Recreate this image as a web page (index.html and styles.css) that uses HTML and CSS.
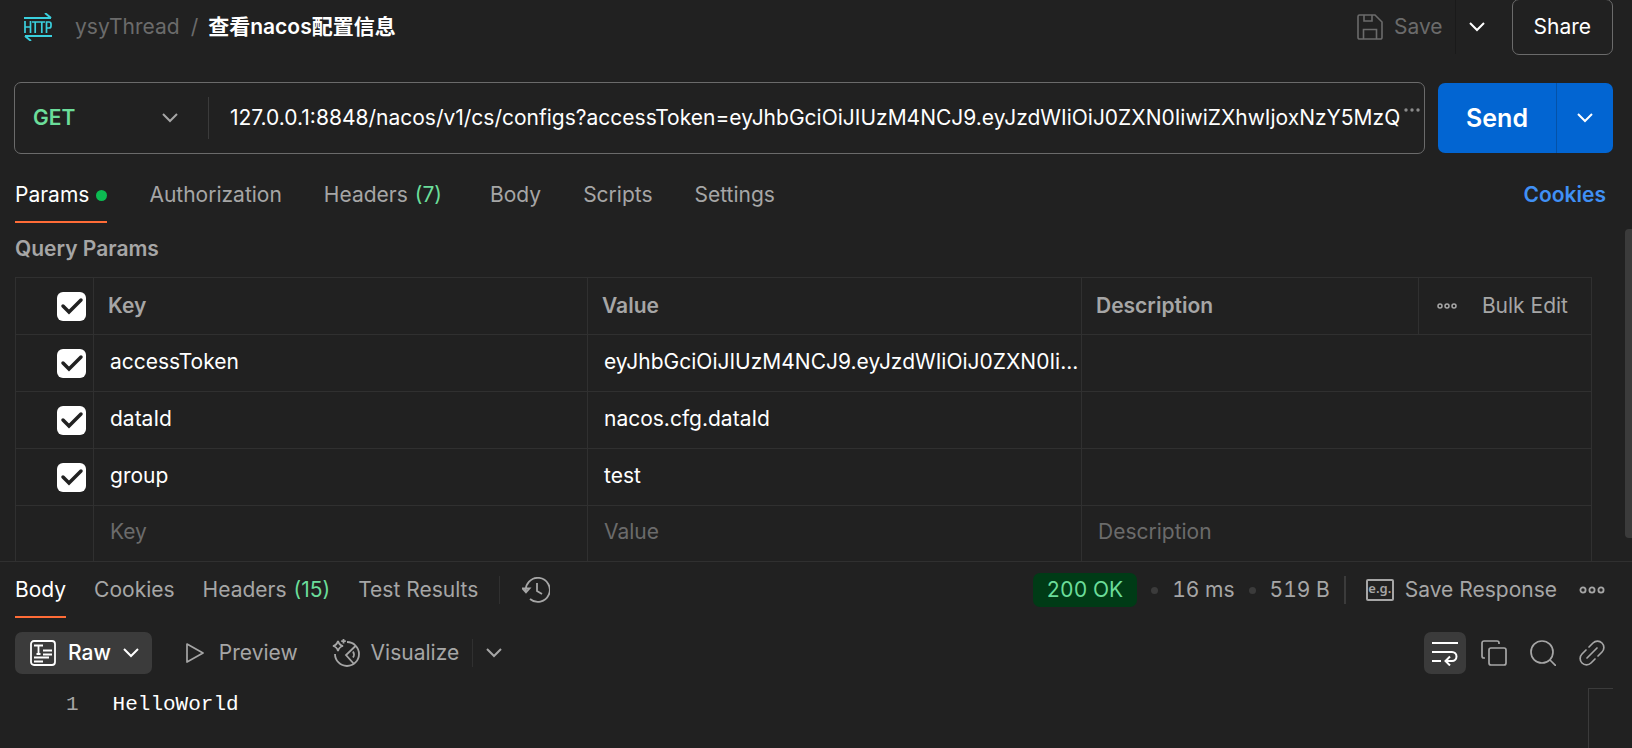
FILE: index.html
```html
<!DOCTYPE html>
<html lang="zh-CN">
<head>
    <meta charset="UTF-8">
    <meta name="viewport" content="width=device-width, initial-scale=1.0">
    <title>查看nacos配置信息</title>
    <link rel="stylesheet" href="styles.css">
</head>
<body>
    <header class="topbar">
        <svg class="http-icon" width="28" height="28" viewBox="0 0 28 28" fill="none" stroke="#3ad0de" stroke-width="2">
            <path d="M0 5h27M21 0l6 5M28 23H1M7 28l-6-5"/>
            <path d="M1 8v12M6.500 8v12M1 14h5.500M8 9h6.500M11.200 9v11M14.500 9H21M17.800 9v11M22.500 20V9H25a2 2 0 0 1 2 2v2a2 2 0 0 1-2 2h-2.500" stroke-width="1.700"/>
        </svg>
        <a class="crumb" href="#">ysyThread</a>
        <span class="slash">/</span>
        <h1>查看nacos配置信息</h1>
        <button class="save" disabled>
            <svg width="26" height="26" viewBox="0 0 26 26" fill="none" stroke="currentColor" stroke-width="1.600">
                <path d="M1 2.500A1.500 1.500 0 0 1 2.500 1H18l7 7v15.500a1.500 1.500 0 0 1-1.500 1.500h-21A1.500 1.500 0 0 1 1 23.500zM7 1v6h8V1M6.500 25v-9.500h13V25"/>
            </svg>
            Save
        </button>
        <button class="save-more" aria-label="Save options">
            <svg class="chevron" viewBox="0 0 16 10"><path d="M1 1l7 7 7-7"/></svg>
        </button>
        <button class="share">Share</button>
    </header>

    <form class="request">
        <div class="url-box">
            <button type="button" class="method">
                GET
                <svg class="chevron" viewBox="0 0 16 10"><path d="M1 1l7 7 7-7"/></svg>
            </button>
            <input class="url" type="text" aria-label="Request URL" value="127.0.0.1:8848/nacos/v1/cs/configs?accessToken=eyJhbGciOiJIUzM4NCJ9.eyJzdWIiOiJ0ZXN0IiwiZXhwIjoxNzY5MzQ">
            <svg class="url-more" width="16" height="4" viewBox="0 0 16 4" fill="currentColor">
                <circle cx="2" cy="2" r="1.700"/><circle cx="8" cy="2" r="1.700"/><circle cx="14" cy="2" r="1.700"/>
            </svg>
        </div>
        <div class="send-group">
            <button type="button" class="send">Send</button>
            <button type="button" class="send-more" aria-label="Send options">
                <svg class="chevron" viewBox="0 0 16 10"><path d="M1 1l7 7 7-7"/></svg>
            </button>
        </div>
    </form>

    <nav class="tabs">
        <a class="active" href="#">Params <i class="dot"></i></a>
        <a href="#">Authorization</a>
        <a class="wide" href="#">Headers <b>(7)</b></a>
        <a href="#">Body</a>
        <a href="#">Scripts</a>
        <a href="#">Settings</a>
        <a class="cookies" href="#">Cookies</a>
    </nav>

    <section class="params">
        <h2>Query Params</h2>
        <table>
            <colgroup>
                <col class="col-check"><col class="col-key"><col class="col-value"><col><col class="col-bulk">
            </colgroup>
            <thead>
                <tr>
                    <th><input type="checkbox" aria-label="Select all" checked></th>
                    <th>Key</th>
                    <th>Value</th>
                    <th>Description</th>
                    <th>
                        <div class="bulk">
                            <button aria-label="Columns">
                                <svg width="20" height="8" viewBox="0 0 20 8" fill="none" stroke="currentColor" stroke-width="1.500">
                                    <circle cx="3" cy="4" r="2"/><circle cx="10" cy="4" r="2"/><circle cx="17" cy="4" r="2"/>
                                </svg>
                            </button>
                            <button>Bulk Edit</button>
                        </div>
                    </th>
                </tr>
            </thead>
            <tbody>
                <tr>
                    <td><input type="checkbox" aria-label="accessToken" checked></td>
                    <td>accessToken</td>
                    <td>eyJhbGciOiJIUzM4NCJ9.eyJzdWIiOiJ0ZXN0Ii...</td>
                    <td colspan="2"></td>
                </tr>
                <tr>
                    <td><input type="checkbox" aria-label="dataId" checked></td>
                    <td>dataId</td>
                    <td>nacos.cfg.dataId</td>
                    <td colspan="2"></td>
                </tr>
                <tr>
                    <td><input type="checkbox" aria-label="group" checked></td>
                    <td>group</td>
                    <td>test</td>
                    <td colspan="2"></td>
                </tr>
                <tr class="new-row">
                    <td></td>
                    <td><input type="text" aria-label="Key" placeholder="Key"></td>
                    <td><input type="text" aria-label="Value" placeholder="Value"></td>
                    <td colspan="2"><input type="text" aria-label="Description" placeholder="Description"></td>
                </tr>
            </tbody>
        </table>
        <div class="scrollbar"></div>
    </section>

    <section class="response">
        <div class="response-bar">
            <nav class="response-tabs">
                <a class="active" href="#">Body</a>
                <a href="#">Cookies</a>
                <a href="#">Headers <b>(15)</b></a>
                <a href="#">Test Results</a>
            </nav>
            <button class="history" aria-label="History">
                <svg width="28" height="26" viewBox="0 0 28 26" fill="none" stroke="currentColor" stroke-width="1.800">
                    <path d="M4 15A12 12 0 1 1 8 22M.5 11.500L4 15.500l3.500-4zM15 6v8l5 3"/>
                </svg>
            </button>
            <div class="status">
                <span class="badge">200 OK</span>
                <i class="sep"></i>
                <span>16 ms</span>
                <i class="sep"></i>
                <span>519 B</span>
            </div>
            <button class="save-response">
                <span class="example">e.g.</span>
                Save Response
            </button>
            <button class="response-more" aria-label="More">
                <svg width="26" height="10" viewBox="0 0 26 10" fill="none" stroke="currentColor" stroke-width="1.800">
                    <circle cx="4" cy="5" r="2.600"/><circle cx="13" cy="5" r="2.600"/><circle cx="22" cy="5" r="2.600"/>
                </svg>
            </button>
        </div>

        <div class="view-bar">
            <button class="raw">
                <svg width="26" height="26" viewBox="0 0 26 26" fill="none" stroke="currentColor" stroke-width="1.800">
                    <rect x="1" y="1" width="24" height="24" rx="3"/>
                    <path d="M4 5.500h9M8.500 5v9M6.500 14h4M13 10.500h9M13 14.500h9M4 17.500h15M4 21.500h9"/>
                </svg>
                Raw
                <svg class="chevron" viewBox="0 0 16 10"><path d="M1 1l7 7 7-7"/></svg>
            </button>
            <button class="preview">
                <svg width="18" height="20" viewBox="0 0 18 20" fill="none" stroke="currentColor" stroke-width="1.700" stroke-linejoin="round">
                    <path d="M1 1l16 9-16 9z"/>
                </svg>
                Preview
            </button>
            <button class="visualize">
                <svg width="28" height="28" viewBox="0 0 28 28" fill="none" stroke="currentColor" stroke-width="1.800">
                    <path d="M15 3a12 12 0 1 1-12 12M23.500 7L14 16l8 9M21 12.500q2 3 0 6"/>
                    <path d="M6 2q1 4 5 5-4 1-5 5-1-4-5-5 4-1 5-5zM11.500 0v4.500M9.200 2.200h4.600"/>
                </svg>
                Visualize
            </button>
            <button class="visualize-more" aria-label="Visualize options">
                <svg class="chevron" viewBox="0 0 16 10"><path d="M1 1l7 7 7-7"/></svg>
            </button>
            <div class="tools">
                <button class="wrap" aria-label="Wrap lines">
                    <svg width="26" height="26" viewBox="0 0 26 26" fill="none" stroke="currentColor" stroke-width="2">
                        <path d="M0 3h26M0 12h20a4.500 4.500 0 0 1 0 9h-6M0 21h9M18 16.500L13.500 21l4.500 4.500"/>
                    </svg>
                </button>
                <button aria-label="Copy">
                    <svg width="26" height="26" viewBox="0 0 26 26" fill="none" stroke="currentColor" stroke-width="1.700">
                        <rect x="8" y="8" width="17" height="17" rx="2"/>
                        <path d="M4 18H3a2 2 0 0 1-2-2V3a2 2 0 0 1 2-2h13a2 2 0 0 1 2 2v1"/>
                    </svg>
                </button>
                <button aria-label="Search">
                    <svg width="26" height="26" viewBox="0 0 26 26" fill="none" stroke="currentColor" stroke-width="1.700">
                        <circle cx="12" cy="12" r="11"/><path d="M20 20l6 6"/>
                    </svg>
                </button>
                <button aria-label="Copy link">
                    <svg width="26" height="26" viewBox="0 0 26 26" fill="none" stroke="currentColor" stroke-width="1.700" stroke-linecap="round">
                        <path d="M10 7l4-4a6 6 0 0 1 9 9l-4 4M16 19l-4 4a6 6 0 0 1-9-9l4-4M8 18L18 8"/>
                    </svg>
                </button>
            </div>
        </div>

        <div class="editor">
            <span class="line-number">1</span>
            <code>HelloWorld</code>
            <div class="minimap"></div>
        </div>
    </section>
</body>
</html>
```
FILE: styles.css
```css
* {
    box-sizing: border-box;
}

body {
    display: flex;
    flex-direction: column;
    height: 100vh;
    margin: 0;
    overflow: hidden;
    background: #212121;
    color: #fff;
    font-family: Inter, "Noto Sans CJK SC", sans-serif;
    font-size: 21px;
    line-height: 28px;
}

button, input {
    padding: 0;
    border: none;
    background: none;
    color: inherit;
    font: inherit;
}

button {
    display: flex;
    align-items: center;
    white-space: nowrap;
}

a {
    color: inherit;
    text-decoration: none;
}

svg {
    flex: none;
}

.chevron {
    width: 16px;
    height: 10px;
    fill: none;
    stroke: currentColor;
    stroke-width: 2;
}

/* top bar */
.topbar {
    display: flex;
    align-items: center;
    height: 54px;
    padding: 0 19px 0 24px;
}

.crumb {
    margin-left: 23px;
    color: #6b6b6b;
}

.slash {
    margin: 0 10px 0 11px;
    color: #6b6b6b;
}

h1 {
    margin: 0 auto 0 0;
    font-size: 21px;
    font-weight: 600;
}

.save {
    gap: 11px;
    height: 54px;
    padding-right: 12px;
    border-right: 1px solid #1a1a1a;
    color: #6b6b6b;
}

.save-more {
    padding: 0 27px 0 13px;
}

.share {
    height: 56px;
    padding: 0 21px;
    border: 1px solid #6b6b6b;
    border-radius: 7px;
}

/* request line */
.request {
    display: flex;
    gap: 13px;
    margin: 28px 19px 0 14px;
}

.url-box {
    display: flex;
    flex: 1;
    align-items: center;
    height: 72px;
    padding: 0 4px 0 18px;
    border: 1px solid #6b6b6b;
    border-radius: 7px;
}

.method {
    justify-content: space-between;
    width: 176px;
    height: 42px;
    padding-right: 30px;
    border-right: 1px solid #3b3b3b;
    color: #6bdd9a;
    font-weight: 600;
}

.method .chevron {
    color: #a6a6a6;
}

.url {
    flex: 1;
    min-width: 0;
    padding-left: 21px;
}

.url-more {
    margin-bottom: 16px;
    color: #8b8b8b;
}

.send-group {
    display: flex;
    height: 70px;
    margin-top: 1px;
    border-radius: 7px;
    background: #0265d2;
}

.send {
    padding: 0 28px;
    font-size: 25px;
    font-weight: 600;
}

.send-more {
    padding: 0 20px;
    border-left: 1px solid #0452a8;
}

/* tabs */
.tabs, .response-tabs {
    display: flex;
    color: #a6a6a6;
}

.tabs {
    gap: 42px;
    padding: 27px 26px 0 15px;
}

.tabs a, .response-tabs a {
    display: flex;
    align-items: center;
    gap: 7px;
    height: 42px;
    padding-bottom: 12px;
    border-bottom: 2px solid transparent;
    white-space: nowrap;
}

.tabs .active, .response-tabs .active {
    border-color: #ff6c37;
    color: #fff;
}

.tabs b, .response-tabs b {
    color: #6bdd9a;
    font-weight: 400;
}

.tabs .wide {
    padding-right: 6px;
}

.dot {
    width: 11px;
    height: 11px;
    border-radius: 50%;
    background: #0cbb52;
}

.tabs .cookies {
    margin-left: auto;
    color: #4090f5;
    font-weight: 600;
}

/* query params */
.params {
    position: relative;
    height: 338px;
    padding: 12px 40px 0 15px;
    overflow: hidden;
}

h2 {
    margin: 0 0 14px;
    color: #a6a6a6;
    font-size: 21px;
    font-weight: 600;
}

table {
    width: 100%;
    border-collapse: collapse;
    table-layout: fixed;
}

.col-check {
    width: 78px;
}

.col-key, .col-value {
    width: 494px;
}

.col-bulk {
    width: 173px;
}

th, td {
    height: 57px;
    padding: 0 0 2px 16px;
    border: 1px solid #303030;
    text-align: left;
    white-space: nowrap;
}

th {
    padding: 0 14px;
    color: #a6a6a6;
    font-weight: 600;
}

th:first-child, td:first-child {
    padding: 0 7px 0 0;
    text-align: right;
}

.new-row td {
    padding-bottom: 4px;
}

td input[type="text"] {
    width: 100%;
}

::placeholder {
    color: #6b6b6b;
    opacity: 1;
}

input[type="checkbox"] {
    width: 29px;
    height: 29px;
    margin: 0;
    border-radius: 6px;
    appearance: none;
    background: #fff url("data:image/svg+xml,%3Csvg xmlns='http://www.w3.org/2000/svg' viewBox='0 0 29 29'%3E%3Cpath d='M6 14l6 6L24 8' fill='none' stroke='%23212121' stroke-width='3.500' stroke-linecap='round'/%3E%3C/svg%3E");
    vertical-align: middle;
}

.bulk {
    display: flex;
    justify-content: space-between;
    padding: 0 9px 0 4px;
    font-weight: 400;
}

.scrollbar {
    position: absolute;
    top: 6px;
    right: 0;
    width: 7px;
    height: 309px;
    border-radius: 4px 0 0 4px;
    background: #3b3b3b;
}

/* response */
.response {
    display: flex;
    flex: 1;
    flex-direction: column;
    border-top: 1px solid #303030;
    color: #a6a6a6;
}

.response-bar {
    display: flex;
    align-items: flex-start;
    padding: 14px 27px 0 15px;
}

.response-bar > button, .status {
    height: 28px;
}

.response-tabs {
    gap: 28px;
}

.history {
    margin-left: 21px;
    padding-left: 22px;
    border-left: 1px solid #303030;
}

.status {
    display: flex;
    align-items: center;
    gap: 14px;
    margin-left: auto;
    font-variant-numeric: tabular-nums;
}

.badge {
    padding: 3px 14px;
    border-radius: 7px;
    background: #003b16;
    color: #6bdd9a;
}

.sep {
    width: 7px;
    height: 7px;
    border-radius: 50%;
    background: #3b3b3b;
}

.save-response {
    gap: 11px;
    margin-left: 14px;
    padding-left: 20px;
    border-left: 2px solid #3b3b3b;
}

.example {
    width: 28px;
    height: 22px;
    border: 2px solid #a6a6a6;
    border-radius: 2px;
    font-family: "Noto Sans", sans-serif;
    font-size: 13px;
    font-weight: 600;
    line-height: 15px;
}

.response-more {
    margin-left: 22px;
}

/* view switcher */
.view-bar {
    display: flex;
    align-items: center;
    padding: 14px 19px 0 15px;
}

.raw {
    gap: 12px;
    height: 42px;
    padding: 0 13px 0 15px;
    border-radius: 7px;
    background: #3b3b3b;
    color: #fff;
    font-weight: 500;
}

.preview {
    gap: 15px;
    margin-left: 34px;
}

.visualize {
    gap: 11px;
    margin-left: 34px;
    padding-right: 13px;
    border-right: 1px solid #303030;
}

.visualize-more {
    padding-left: 13px;
}

.tools {
    display: flex;
    gap: 7px;
    margin-left: auto;
}

.tools button {
    justify-content: center;
    width: 42px;
    height: 42px;
    border-radius: 7px;
}

.tools .wrap {
    background: #3b3b3b;
    color: #fff;
}

/* response body */
.editor {
    display: flex;
    flex: 1;
    margin-top: 14px;
    padding: 0 19px 0 66px;
    font-family: "Liberation Mono", monospace;
}

.line-number {
    padding-top: 3px;
}

code {
    padding: 3px 0 0 34px;
    color: #fff;
    font: inherit;
}

.minimap {
    width: 25px;
    margin-left: auto;
    border: solid #3b3b3b;
    border-width: 1px 0 0 1px;
}
```
